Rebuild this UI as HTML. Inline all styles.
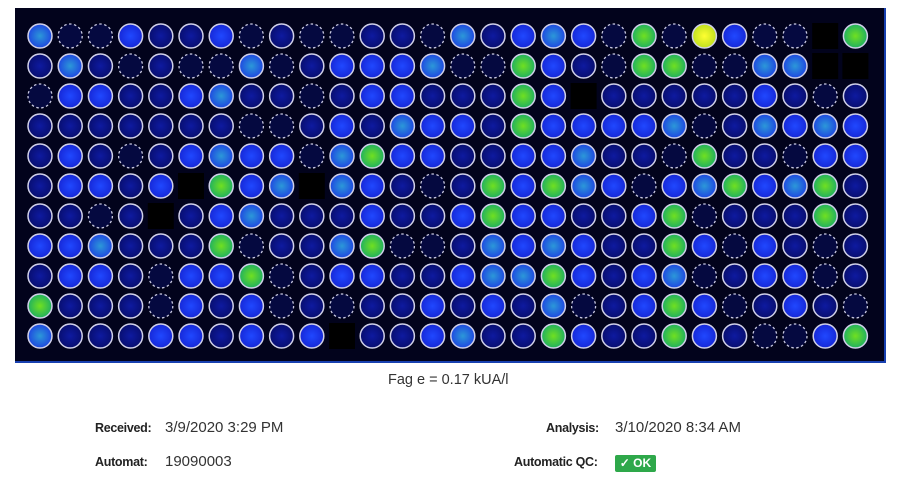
<!DOCTYPE html>
<html><head><meta charset="utf-8">
<style>
html,body{margin:0;padding:0;background:#fff;width:900px;height:487px;overflow:hidden;font-family:"Liberation Sans",sans-serif;}
#plate{position:absolute;left:15px;top:8px;width:871px;height:355px;}
.t{position:absolute;font-size:15px;color:#333;white-space:nowrap;}
.lb{font-weight:bold;font-size:12.5px;color:#222;letter-spacing:-0.3px;}
.ok{position:absolute;left:615px;top:455px;width:41px;height:17px;background:#2ea84a;border-radius:2px;color:#fff;font-weight:bold;font-size:12px;line-height:17px;text-align:center;}
</style></head><body>
<svg id="plate" width="871" height="355" viewBox="0 0 871 355"></svg>
<div class="t" style="left:388px;top:372px;font-size:14.5px;">Fag e = 0.17 kUA/l</div>
<div class="t lb" style="left:95px;top:421px;">Received:</div>
<div class="t" style="left:165px;top:419px;">3/9/2020 3:29 PM</div>
<div class="t lb" style="left:95px;top:455px;">Automat:</div>
<div class="t" style="left:165px;top:453px;">19090003</div>
<div class="t lb" style="left:546px;top:421px;">Analysis:</div>
<div class="t" style="left:615px;top:419px;">3/10/2020 8:34 AM</div>
<div class="t lb" style="left:514px;top:455px;">Automatic QC:</div>
<div class="ok">&#10003; OK</div>
<script>
var rows=[
"lddbnnbdnddnndlnblbdgdybddxg",
"nlndnddldnbbblddgbndggddllxx",
"dbbnnblnndnbbnnngbxnnnnnbndn",
"nnnnnnnddnbnlbbngbbbbldnlblb",
"nbndnblbbdlgbbnnbblnndgnndbb",
"nbbnbxgblxlbndngbglbdblgblgn",
"nndnxnblnnnbnnbgbbnnbgdnnngn",
"bblnnngdnnlgddnlblbnngbdbndn",
"nbbndbbgdnbbnnbllgbnbldnbbdn",
"gnnndbnbdndnnbnbnldnbgbdnbnd",
"lnnnbbnbnbxnnblnngbnngbnddbg"];
var s='<defs>'+
'<radialGradient id="n"><stop offset="0" stop-color="#0e1aa0"/><stop offset="1" stop-color="#080e70"/></radialGradient>'+
'<radialGradient id="b"><stop offset="0" stop-color="#2048ff"/><stop offset="1" stop-color="#1628d8"/></radialGradient>'+
'<radialGradient id="l"><stop offset="0" stop-color="#2c98d8"/><stop offset="1" stop-color="#1e48e0"/></radialGradient>'+
'<radialGradient id="g"><stop offset="0" stop-color="#70e020"/><stop offset="1" stop-color="#20b060"/></radialGradient>'+
'<radialGradient id="y"><stop offset="0" stop-color="#ffff30"/><stop offset="1" stop-color="#c0e020"/></radialGradient>'+
'</defs><rect width="871" height="355" fill="#02031c"/><rect x="869" y="0" width="2" height="355" fill="#1840b0"/><rect x="0" y="353" width="871" height="2" fill="#1840b0"/>';
for(var r=0;r<rows.length;r++)for(var c=0;c<28;c++){
 var t=rows[r][c],x=25+c*30.2,y=28+r*30;
 if(t=='x'){s+='<rect x="'+(x-13)+'" y="'+(y-13)+'" width="26" height="26" fill="#000"/>';continue;}
 if(t=='d'){s+='<circle cx="'+x+'" cy="'+y+'" r="12" fill="#050940" stroke="#c8c8e0" stroke-width="1.3" stroke-dasharray="2.5 2.5"/>';continue;}
 s+='<circle cx="'+x+'" cy="'+y+'" r="12" fill="url(#'+t+')" stroke="#d0d0e8" stroke-width="1.5"/>';
}
document.getElementById('plate').innerHTML=s;
</script>
</body></html>
